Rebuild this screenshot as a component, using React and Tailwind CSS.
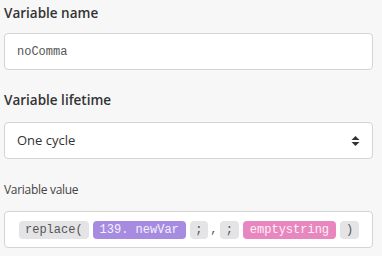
export default function App() {
  const mono = { fontFamily: '"Liberation Mono", monospace' }
  return (
    <div className="w-[382px] h-[256px] bg-[#f7f7f7] px-1 pt-[3px] text-[#333]" style={{ fontFamily: '"Open Sans", sans-serif' }}>
      <div className="text-[13.5px] font-semibold leading-[18px] pt-[1px]">Variable name</div>
      <div className="mt-[11px] h-[37px] w-[369px] bg-white border border-[#d4d4d4] rounded flex items-center px-3">
        <span className="text-[12px] text-[#555]" style={mono}>noComma</span>
      </div>

      <div className="mt-[21px] text-[13.5px] font-semibold leading-[18px]">Variable lifetime</div>
      <div className="mt-[13px] h-[37px] w-[369px] bg-white border border-[#d4d4d4] rounded flex items-center justify-between pl-3 pr-[12px]">
        <span className="text-[13px] text-[#333]">One cycle</span>
        <svg width="9" height="12" viewBox="0 0 9 12">
          <path d="M4.5 1 L8.5 5 L0.5 5 Z" fill="#333" />
          <path d="M4.5 11 L8.5 7 L0.5 7 Z" fill="#333" />
        </svg>
      </div>

      <div className="mt-[22px] text-[12px] tracking-[-0.3px] leading-[18px] text-[#444]">Variable value</div>
      <div className="mt-[12px] h-[37px] w-[369px] bg-white border border-[#d4d4d4] rounded flex items-center pl-[14px] gap-1 text-[12px]" style={mono}>
        <span className="h-[18px] px-[6px] rounded bg-[#e4e4e7] text-[#555] flex items-center">replace(</span>
        <span className="h-[18px] px-[7px] rounded bg-[#a78be0] text-[#f4f0ff] flex items-center">139. newVar</span>
        <span className="h-[18px] w-[18px] rounded bg-[#e4e4e7] text-[#555] flex items-center justify-center">;</span>
        <span className="w-[4px] flex justify-center text-[#555]">,</span>
        <span className="h-[18px] w-[19px] rounded bg-[#e4e4e7] text-[#555] flex items-center justify-center">;</span>
        <span className="h-[18px] px-[7px] rounded bg-[#e887bf] text-[#fdf0f7] flex items-center">emptystring</span>
        <span className="h-[18px] w-[19px] rounded bg-[#e4e4e7] text-[#555] flex items-center justify-center">)</span>
      </div>
    </div>
  )
}
